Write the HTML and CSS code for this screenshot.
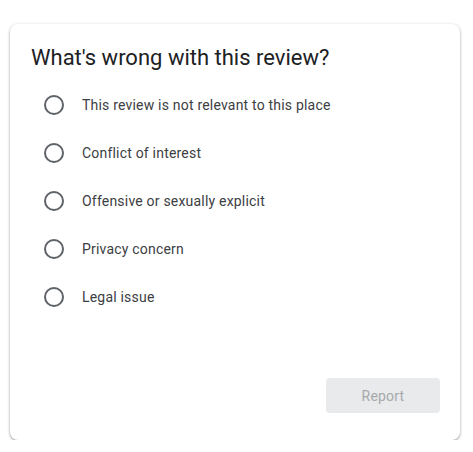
FILE: index.html
```html
<!DOCTYPE html>
<html>
<head>
<meta charset="utf-8">
<link rel="stylesheet" href="styles.css">
</head>
<body>
<div class="card">
  <h1 class="title">What's wrong with this review?</h1>
  <ul class="options">
    <li class="option"><span class="radio"></span><span class="label">This review is not relevant to this place</span></li>
    <li class="option"><span class="radio"></span><span class="label">Conflict of interest</span></li>
    <li class="option"><span class="radio"></span><span class="label">Offensive or sexually explicit</span></li>
    <li class="option"><span class="radio"></span><span class="label">Privacy concern</span></li>
    <li class="option"><span class="radio"></span><span class="label">Legal issue</span></li>
  </ul>
  <div class="actions">
    <button class="report" disabled>Report</button>
  </div>
</div>
</body>
</html>
```

FILE: styles.css
```css
html, body {
  margin: 0;
  padding: 0;
  background: #ffffff;
  font-family: Roboto, "Liberation Sans", Arial, sans-serif;
}
.card {
  box-sizing: border-box;
  margin: 24px 0 0 10px;
  width: 450px;
  height: 416px;
  border-radius: 8px;
  background: #fff;
  box-shadow: 0 1px 3px rgba(60,64,67,0.35), 0 1px 2px rgba(60,64,67,0.25);
  padding: 20px 20px 27px 21px;
  display: flex;
  flex-direction: column;
}
.title {
  margin: 0;
  font-size: 22px;
  font-weight: 400;
  line-height: 28px;
  color: #202124;
}
.options {
  list-style: none;
  margin: 23px 0 0 0;
  padding: 0 0 0 13px;
  display: flex;
  flex-direction: column;
  gap: 28px;
}
.option {
  display: flex;
  align-items: center;
  height: 20px;
}
.radio {
  box-sizing: border-box;
  width: 20px;
  height: 20px;
  border: 2px solid #5f6368;
  border-radius: 50%;
  flex: none;
}
.label {
  margin-left: 18px;
  font-size: 14px;
  color: #3c4043;
  letter-spacing: 0.2px;
}
.actions {
  margin-top: auto;
  display: flex;
  justify-content: flex-end;
}
.report {
  width: 114px;
  height: 35px;
  border: none;
  border-radius: 4px;
  background: #e8eaeb;
  color: #a7a9ab;
  font-family: Roboto, "Liberation Sans", Arial, sans-serif;
  font-size: 14px;
  letter-spacing: 0.2px;
}
```
